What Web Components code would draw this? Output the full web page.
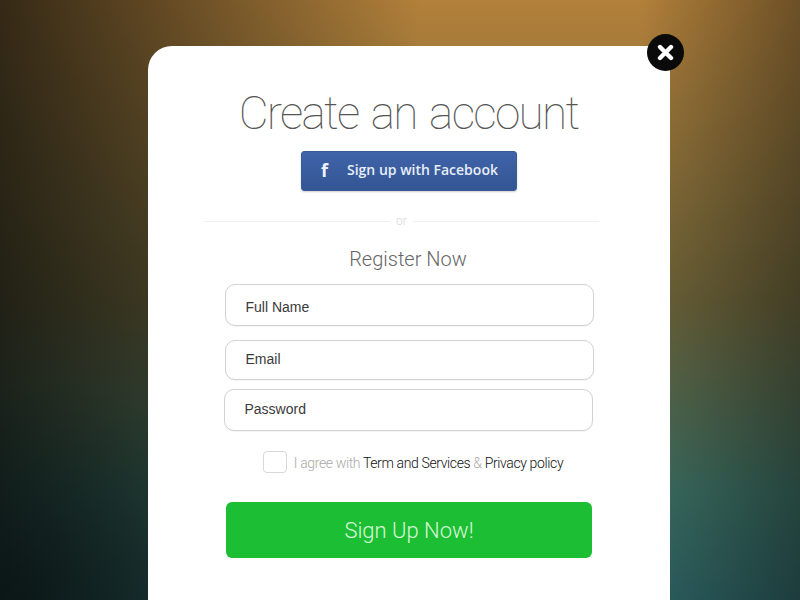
<!DOCTYPE html>
<html>
<head>
<meta charset="utf-8">
<title>Create an account</title>
<style>
  html, body { margin: 0; height: 100%; }
  body {
    overflow: hidden;
    font-family: "Roboto", "Liberation Sans", sans-serif;
    background:
      radial-gradient(ellipse 320px 220px at 0 600px, rgba(5,8,8,.45), rgba(5,8,8,0) 100%),
      linear-gradient(90deg, rgba(5,8,8,.72) 0, rgba(5,8,8,.48) 148px, rgba(5,8,8,0) 420px, rgba(5,8,8,0) 640px, rgba(5,8,8,.4) 800px),
      linear-gradient(180deg, #b2803a 0, #6c6238 50%, #3a6c60 82%, #2c5f60 100%);
  }
</style>
</head>
<body>
<signup-card>
  <close-button slot="close"></close-button>
  <h-title slot="title">Create an account</h-title>
  <fb-button slot="social">Sign up with Facebook</fb-button>
  <or-divider slot="divider">or</or-divider>
  <h-sub slot="sub">Register Now</h-sub>
  <text-field slot="fields" style="height:42px;padding-top:3px">Full Name</text-field>
  <text-field slot="fields" style="height:40px;margin-top:14px;padding-bottom:2px">Email</text-field>
  <text-field slot="fields" style="height:42px;margin-top:9px;margin-left:-1px;margin-right:1px;padding-bottom:2px">Password</text-field>
  <agree-row slot="agree"></agree-row>
  <green-button slot="submit">Sign Up Now!</green-button>
</signup-card>

<script>
class SignupCard extends HTMLElement {
  constructor() {
    super();
    this.attachShadow({ mode: "open" });
    this.shadowRoot.innerHTML = `
      <style>
        :host {
          display: block;
          position: relative;
          box-sizing: border-box;
          width: 522px;
          height: 554px;
          margin: 46px 0 0 148px;
          background: #fff;
          border-radius: 24px 6px 0 0;
        }
        .col { display: flex; flex-direction: column; align-items: center; }
        .fields { width: 369px; margin-top: 11px; display: flex; flex-direction: column; }
        .close { position: absolute; top: -12px; right: -14px; }
      </style>
      <div class="close"><slot name="close"></slot></div>
      <div class="col">
        <slot name="title"></slot>
        <slot name="social"></slot>
        <slot name="divider"></slot>
        <slot name="sub"></slot>
        <div class="fields"><slot name="fields"></slot></div>
        <slot name="agree"></slot>
        <slot name="submit"></slot>
      </div>
    `;
  }
}

class CloseButton extends HTMLElement {
  constructor() {
    super();
    this.attachShadow({ mode: "open" });
    this.shadowRoot.innerHTML = `
      <style>
        :host {
          display: flex; align-items: center; justify-content: center;
          width: 37px; height: 37px; border-radius: 50%;
          background: #0a0a0a;
        }
        svg { display: block; }
      </style>
      <svg width="17" height="17" viewBox="0 0 17 17">
        <path d="M3 3 L14 14 M14 3 L3 14" stroke="#fff" stroke-width="4.4" stroke-linecap="round"/>
      </svg>
    `;
  }
}

class HTitle extends HTMLElement {
  constructor() {
    super();
    this.attachShadow({ mode: "open" });
    this.shadowRoot.innerHTML = `
      <style>
        :host {
          display: block;
          margin: 38px 0 0 -1px;
          height: 67px;
          line-height: 58px;
          font-size: 46px;
          font-weight: 100;
          letter-spacing: -1.7px;
          word-spacing: 3px;
          color: #555;
        }
      </style>
      <slot></slot>
    `;
  }
}

class FbButton extends HTMLElement {
  constructor() {
    super();
    this.attachShadow({ mode: "open" });
    this.shadowRoot.innerHTML = `
      <style>
        :host {
          display: flex;
          align-items: center;
          box-sizing: border-box;
          width: 216px;
          height: 40px;
          padding-bottom: 3px;
          border-radius: 3px;
          border: 1px solid #3a5a98;
          background: linear-gradient(180deg, #3f64a8 0%, #335594 100%);
          box-shadow: 0 1px 2px rgba(0,0,0,.2);
          color: #e8eef8;
          font-family: "Open Sans", sans-serif;
          font-size: 14px;
          font-weight: 600;
        }
        .f { width: 45px; text-align: center; font-size: 18px; font-weight: 700; color: #eef2fa; }
      </style>
      <span class="f">f</span><slot></slot>
    `;
  }
}

class OrDivider extends HTMLElement {
  constructor() {
    super();
    this.attachShadow({ mode: "open" });
    this.shadowRoot.innerHTML = `
      <style>
        :host {
          display: flex;
          align-items: center;
          gap: 6px;
          width: 395px;
          margin: 22px 0 0 -15px;
          height: 16px;
          font-size: 12px;
          font-weight: 300;
          color: #d8d8d8;
        }
        i { flex: 1; height: 1px; background: #f0f0f0; }
      </style>
      <i></i><slot></slot><i></i>
    `;
  }
}

class HSub extends HTMLElement {
  constructor() {
    super();
    this.attachShadow({ mode: "open" });
    this.shadowRoot.innerHTML = `
      <style>
        :host {
          display: block;
          margin: 16px 0 0 -2px;
          height: 28px;
          line-height: 28px;
          font-size: 20px;
          font-weight: 300;
          color: #666;
        }
      </style>
      <slot></slot>
    `;
  }
}

class TextField extends HTMLElement {
  constructor() {
    super();
    this.attachShadow({ mode: "open" });
    this.shadowRoot.innerHTML = `
      <style>
        :host {
          display: flex;
          align-items: center;
          box-sizing: border-box;
          padding-left: 20px;
          border: 1px solid #d2d2d2;
          border-radius: 10px;
          box-shadow: 0 1px 1px rgba(0,0,0,.04);
          background: #fff;
          font-family: "Liberation Sans", sans-serif;
          font-size: 14px;
          color: #3a3a3a;
        }
      </style>
      <slot></slot>
    `;
  }
}

class AgreeRow extends HTMLElement {
  constructor() {
    super();
    this.attachShadow({ mode: "open" });
    this.shadowRoot.innerHTML = `
      <style>
        :host {
          display: flex;
          align-items: center;
          gap: 7px;
          margin: 20px 0 0 8px;
          height: 22px;
          font-size: 14px;
          font-weight: 300;
          letter-spacing: -0.37px;
          color: #aaa;
        }
        .box {
          box-sizing: border-box;
          width: 24px; height: 22px;
          border: 1px solid #d8d8d8;
          border-radius: 4px;
        }
        .txt { padding-top: 2px; }
        b { font-weight: 300; color: #111; }
      </style>
      <span class="box"></span>
      <span class="txt">I agree with <b>Term and Services</b> &amp; <b>Privacy policy</b></span>
    `;
  }
}

class GreenButton extends HTMLElement {
  constructor() {
    super();
    this.attachShadow({ mode: "open" });
    this.shadowRoot.innerHTML = `
      <style>
        :host {
          display: flex;
          align-items: center;
          justify-content: center;
          width: 366px;
          height: 56px;
          margin-top: 29px;
          border-radius: 6px;
          background: #1cbf33;
          color: #d8f7d8;
          font-size: 22px;
          font-weight: 300;
        }
      </style>
      <slot></slot>
    `;
  }
}

customElements.define("signup-card", SignupCard);
customElements.define("close-button", CloseButton);
customElements.define("h-title", HTitle);
customElements.define("fb-button", FbButton);
customElements.define("or-divider", OrDivider);
customElements.define("h-sub", HSub);
customElements.define("text-field", TextField);
customElements.define("agree-row", AgreeRow);
customElements.define("green-button", GreenButton);
</script>
</body>
</html>
